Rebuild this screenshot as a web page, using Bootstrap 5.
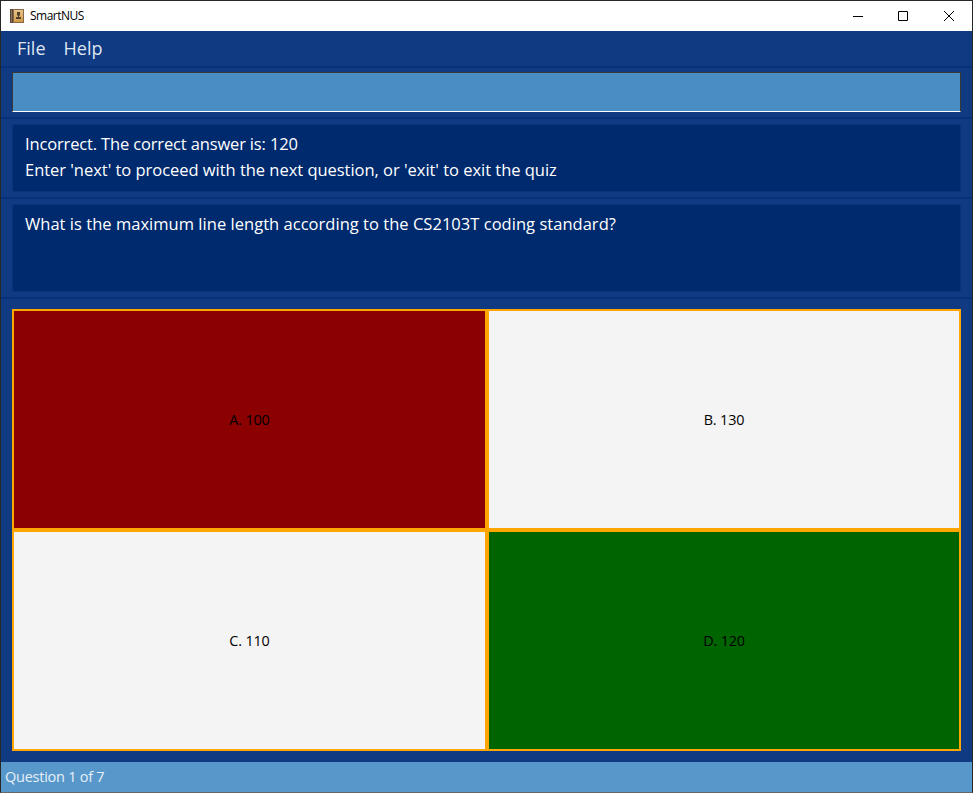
<!DOCTYPE html>
<html lang="en">
<head>
<meta charset="utf-8">
<title>SmartNUS</title>
<meta name="viewport" content="width=device-width, initial-scale=1">
<link href="https://cdn.jsdelivr.net/npm/bootstrap@5.3.0/dist/css/bootstrap.min.css" rel="stylesheet">
<style>
body{font-family:"Open Sans","Noto Sans",sans-serif;background:#103a82}
.app{height:793px;border:1px solid #272727;border-bottom-color:#666;background:#103a82}
.titlebar{height:30px;padding-left:9px;background:#fff;color:#000}
.app-name{font-size:12px;letter-spacing:-.5px;margin-left:6px}
.win-ctl{gap:35px;padding-right:17px}
.menu{height:37px;padding:0 16px;gap:18px;color:#dfe6f2;font-size:18px;line-height:35px;letter-spacing:0;border-bottom:2px solid #09307a}
.pane{padding:5px 11px;border-bottom:2px solid #09307a}
.cmd-pane{padding-top:4px}
.cmd{height:40px;border:1px solid #383838;border-bottom-color:#fff;border-radius:0;background:#4a8cc4;color:#fff;padding:0 12px;outline:0}
.msg{background:#002a6e;border:1px solid #08327a;border-radius:3px;color:#fff;padding:6px 12px;font-size:16.5px;line-height:26px}
.result{height:68px}.question{height:88px}
.l1{letter-spacing:-.15px}.l2{letter-spacing:-.03px}.l3{letter-spacing:.03px}
.choices{display:grid;grid-template-columns:475px 474px;grid-template-rows:221px 221px;margin:10px 11px 11px}
.choice{border:2px solid orange;background:#f4f4f4;color:#000;font-size:14.4px;letter-spacing:-.15px}
.wrong{background:#8b0000}.right{background:#006400}
.status{height:30px;padding-left:4px;background:#5897ca;color:#e6eff7;font-size:14.5px;letter-spacing:-.25px}
</style>
</head>
<body>
<div class="app d-flex flex-column overflow-hidden">
  <header class="titlebar d-flex align-items-center flex-shrink-0">
    <svg width="14" height="14" viewBox="0 0 14 14" aria-hidden="true">
      <defs><linearGradient id="cover" x2="0" y2="1"><stop stop-color="#e6c48c"/><stop offset="1" stop-color="#cf9a45"/></linearGradient></defs>
      <path fill="#8a6844" d="M0 0h14v14H0z"/><path fill="url(#cover)" d="M4 1h9v12H4z"/>
      <path fill="#5a4636" d="M0 0h3v14H0z"/><path fill="#8b735c" d="M1 1h1v12H1z"/>
      <path fill="#51402a" d="M7 3h3v3L9 7v1h2v2H6V8h2V7L7 6z"/>
    </svg>
    <span class="app-name">SmartNUS</span>
    <div class="win-ctl d-flex align-items-center ms-auto">
      <svg width="10" height="10"><path d="M0 5.5h10" stroke="#000"/></svg>
      <svg width="11" height="10"><path d="M.5.5h9v9h-9z" fill="none" stroke="#000"/></svg>
      <svg width="11" height="10"><path d="M0 0l10 10m0-10l-10 10" stroke="#000"/></svg>
    </div>
  </header>
  <nav class="menu d-flex flex-shrink-0"><span>File</span><span>Help</span></nav>
  <div class="pane cmd-pane"><input class="cmd d-block w-100" type="text" aria-label="Command"></div>
  <div class="pane"><div class="msg result"><div><span class="l1">Incorrect. The correct answer is: 120</span></div><div><span class="l2">Enter 'next' to proceed with the next question, or 'exit' to exit the quiz</span></div></div></div>
  <div class="pane"><div class="msg question"><span class="l3">What is the maximum line length according to the CS2103T coding standard?</span></div></div>
  <main class="choices">
    <div class="choice wrong d-flex align-items-center justify-content-center">A. 100</div>
    <div class="choice d-flex align-items-center justify-content-center">B. 130</div>
    <div class="choice d-flex align-items-center justify-content-center">C. 110</div>
    <div class="choice right d-flex align-items-center justify-content-center">D. 120</div>
  </main>
  <footer class="status d-flex align-items-center flex-shrink-0">Question 1 of 7</footer>
</div>
<script src="https://cdn.jsdelivr.net/npm/bootstrap@5.3.0/dist/js/bootstrap.bundle.min.js"></script>
</body>
</html>
